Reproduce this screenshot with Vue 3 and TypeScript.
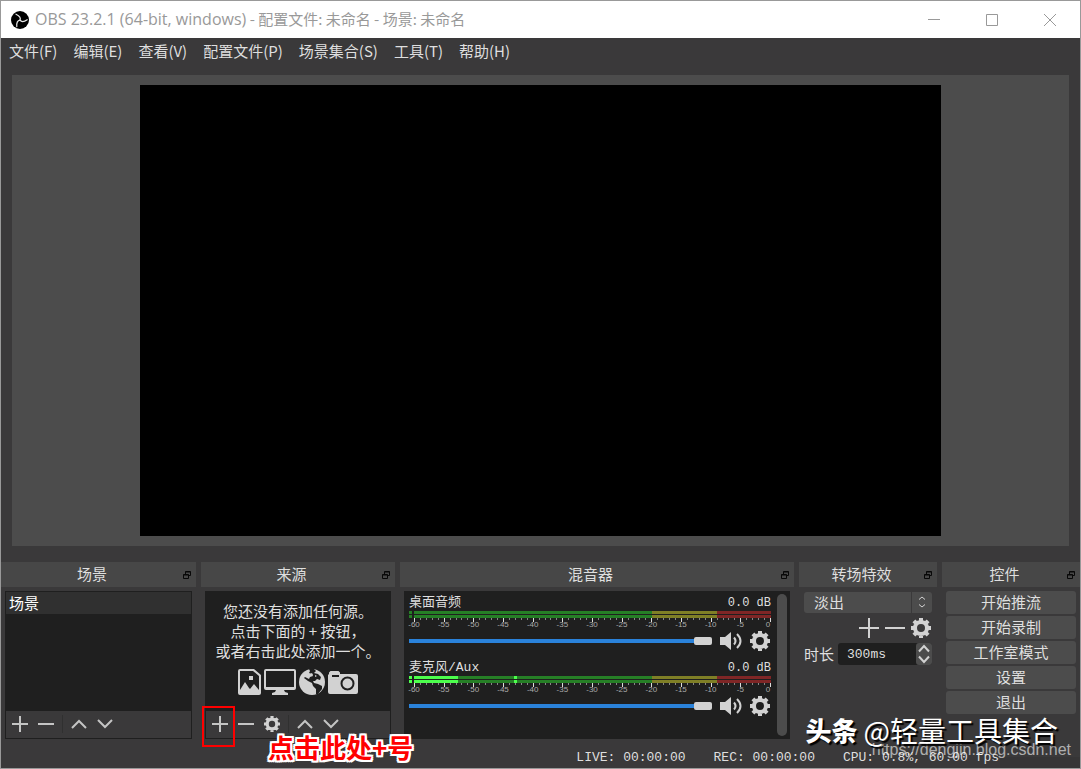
<script setup lang="ts">
import { ref } from 'vue'

interface Channel {
  id: string
  name: string
  level: number
  peak: number | null
}

const menus: string[] = ['文件(F)', '编辑(E)', '查看(V)', '配置文件(P)', '场景集合(S)', '工具(T)', '帮助(H)']
const channels: Channel[] = [
  { id: 'desktop', name: '桌面音频', level: 0, peak: null },
  { id: 'mic', name: '麦克风/Aux', level: 44, peak: 100 },
]
const ticks = Array.from({ length: 61 }, (_, i) => ({
  x: (i * 356) / 60,
  major: i % 5 === 0,
  label: i - 60,
}))
const controls: string[] = ['开始推流', '开始录制', '工作室模式', '设置', '退出']
const transition = ref('淡出')
const duration = ref('300ms')
const volume = ref(100)
const gear =
  'M10 4a6 6 0 1 0 0 12 6 6 0 1 0 0-12zM10 0v4M10 16v4M0 10h4M16 10h4M2.900 2.900l2.600 2.600M14.500 14.500l2.600 2.600M17.100 2.900l-2.600 2.600M5.500 14.500l-2.600 2.600'
const floatIcon = 'M2.500 3v-2.500h5v4h-2M.5 3.500h5v4h-5zM2.500 1h5M.5 4h5'
const blades: number[] = [0, 120, 240]
</script>

<template>
  <div class="window">
    <header class="titlebar">
      <svg class="logo" viewBox="0 0 18 18">
        <circle cx="9" cy="9" r="9" fill="#000" stroke="none" />
        <g fill="none" stroke="#e8e8e8" stroke-width="1.200" stroke-linecap="round">
          <path v-for="a in blades" :key="a" d="M9 9.200C10.200 6.400 8.500 4.800 5 3.200" :transform="`rotate(${a} 9 9.200)`" />
        </g>
      </svg>
      <h1><span class="product">OBS 23.2.1 (64-bit, windows)</span> - 配置文件: 未命名 - 场景: 未命名</h1>
      <div class="winbtns">
        <button aria-label="最小化"><svg viewBox="0 0 12 12"><path d="M0 5.500h12" /></svg></button>
        <button aria-label="最大化"><svg viewBox="0 0 12 12"><path d="M.5.5h11v11H.5z" /></svg></button>
        <button aria-label="关闭"><svg viewBox="0 0 12 12"><path d="M0 0l12 12M12 0L0 12" /></svg></button>
      </div>
    </header>

    <nav class="menubar">
      <button v-for="m in menus" :key="m">{{ m }}</button>
    </nav>

    <main class="preview"><div class="canvas"></div></main>

    <div class="docks">
      <section class="dock">
        <div class="dock-title">
          <h2>场景</h2>
          <button class="float" aria-label="浮动"><svg viewBox="0 0 8 8"><path :d="floatIcon" /></svg></button>
        </div>
        <div class="frame">
          <ul class="list"><li>场景</li></ul>
          <div class="tools">
            <button aria-label="添加"><svg viewBox="0 0 16 16"><path d="M8 0v16M0 8h16" /></svg></button>
            <button aria-label="删除"><svg viewBox="0 0 16 16"><path d="M0 8h16" /></svg></button>
            <i class="sep"></i>
            <button aria-label="上移"><svg viewBox="0 0 16 16"><path d="M1 12l7-7 7 7" /></svg></button>
            <button aria-label="下移"><svg viewBox="0 0 16 16"><path d="M1 4l7 7 7-7" /></svg></button>
          </div>
        </div>
      </section>

      <section class="dock">
        <div class="dock-title">
          <h2>来源</h2>
          <button class="float" aria-label="浮动"><svg viewBox="0 0 8 8"><path :d="floatIcon" /></svg></button>
        </div>
        <div class="frame">
          <div class="empty">
            <p>您还没有添加任何源。<br />点击下面的 + 按钮，<br />或者右击此处添加一个。</p>
            <div class="kinds">
              <svg class="k-image" viewBox="0 0 23 26"><path fill-rule="evenodd" d="M2 0h14l7 6v18a2 2 0 0 1-2 2H2a2 2 0 0 1-2-2V2a2 2 0 0 1 2-2zm0 2v19l5-8 4 6 1 1 4-5 5 6V7l-6-5zM11 7h4v4h-4z" /></svg>
              <svg class="k-screen" viewBox="0 0 32 26"><path fill-rule="evenodd" d="M2 0h28a2 2 0 0 1 2 2v17a2 2 0 0 1-2 2H20l1 2 3 1v2H8v-2l3-1 1-2H2a2 2 0 0 1-2-2V2a2 2 0 0 1 2-2zm0 2v16h28V2z" /></svg>
              <svg class="k-globe" viewBox="0 0 26 26"><circle cx="13" cy="13" r="13" /><path fill="#1f1f1f" d="M10 0l5 0 2 2-2 2 4 1 3 3-1 3-3-1-2 2-2 0 1 2 4 1 4 2 0 3-4 5-2 0 0-5-3-3-1-3-4-2-4-3 1-1 4 2 1-2 3-1-1-2-3-1 1-2z" /><path d="M12 4l2 1-1 2-2-1zM16 6l2 1-2 1z" /></svg>
              <svg class="k-camera" viewBox="0 0 30 23"><path fill-rule="evenodd" d="M1 3V1.500L2.500 0h8L12 1.500V3h16a2 2 0 0 1 2 2v16a2 2 0 0 1-2 2H2a2 2 0 0 1-2-2V4zM4 4v2h7V4zM19.500 5.500a7 7 0 1 0 0 14 7 7 0 0 0 0-14zm0 2a5 5 0 1 1 0 10 5 5 0 0 1 0-10z" /></svg>
            </div>
          </div>
          <div class="tools">
            <button class="marked" aria-label="添加"><svg viewBox="0 0 16 16"><path d="M8 0v16M0 8h16" /></svg></button>
            <button aria-label="删除"><svg viewBox="0 0 16 16"><path d="M0 8h16" /></svg></button>
            <button aria-label="属性"><svg class="gear" viewBox="0 0 20 20"><path :d="gear" /></svg></button>
            <i class="sep"></i>
            <button aria-label="上移"><svg viewBox="0 0 16 16"><path d="M1 12l7-7 7 7" /></svg></button>
            <button aria-label="下移"><svg viewBox="0 0 16 16"><path d="M1 4l7 7 7-7" /></svg></button>
          </div>
          <span class="callout">点击此处+号</span>
        </div>
      </section>

      <section class="dock">
        <div class="dock-title">
          <h2>混音器</h2>
          <button class="float" aria-label="浮动"><svg viewBox="0 0 8 8"><path :d="floatIcon" /></svg></button>
        </div>
        <div class="mixer">
          <div class="channels">
            <div v-for="c in channels" :key="c.id" class="channel">
              <div class="names"><label :for="c.id">{{ c.name }}</label><span>0.0 dB</span></div>
              <svg class="meter" viewBox="0 0 362 18">
                <g v-for="y in [0, 4]" :key="y">
                  <rect x="0" :y="y" width="3" height="3" :fill="c.level ? '#4cff4c' : '#267f26'" />
                  <rect x="5" :y="y" width="238" height="3" fill="#267f26" />
                  <rect x="243" :y="y" width="65" height="3" fill="#7f7f26" />
                  <rect x="308" :y="y" width="54" height="3" fill="#7f2626" />
                  <rect x="5" :y="y" :width="c.level" height="3" fill="#4cff4c" />
                  <rect v-if="c.peak" :x="c.peak + 5" :y="y" width="3" height="3" fill="#4cff4c" />
                </g>
                <g v-for="t in ticks" :key="t.label">
                  <rect :x="Math.round(t.x) + 5" y="7" width="1" :height="t.major ? 4 : 2" :fill="t.major ? '#ddd' : '#888'" />
                  <text v-if="t.major" :x="t.label === 0 ? 359 : t.x + 5" y="16" text-anchor="middle">{{ t.label }}</text>
                </g>
              </svg>
              <div class="vol">
                <input :id="c.id" v-model="volume" type="range" min="0" max="100" />
                <button aria-label="静音"><svg class="speaker" viewBox="0 0 22 18"><path d="M0 5h5l6-5v18l-6-5H0z" /><path class="wave" d="M14 5.500q3 3.500 0 7M17 2q7 7 0 14" /></svg></button>
                <button aria-label="设置"><svg class="gear big" viewBox="0 0 20 20"><path :d="gear" /></svg></button>
              </div>
            </div>
          </div>
          <div class="scroll"></div>
        </div>
      </section>

      <section class="dock">
        <div class="dock-title">
          <h2>转场特效</h2>
          <button class="float" aria-label="浮动"><svg viewBox="0 0 8 8"><path :d="floatIcon" /></svg></button>
        </div>
        <div class="trans">
          <div class="combo">
            <select v-model="transition" aria-label="转场特效"><option>淡出</option></select>
            <span class="arrows"><svg viewBox="0 0 8 12"><path d="M1 3.500L4 1l3 2.500M1 8.500L4 11l3-2.500" /></svg></span>
          </div>
          <div class="trans-tools">
            <button aria-label="添加"><svg viewBox="0 0 20 20"><path d="M10 0v20M0 10h20" /></svg></button>
            <button aria-label="删除"><svg viewBox="0 0 20 20"><path d="M0 10h20" /></svg></button>
            <button aria-label="属性"><svg class="gear big" viewBox="0 0 20 20"><path :d="gear" /></svg></button>
          </div>
          <div class="duration">
            <label for="dur">时长</label>
            <div class="spin">
              <input id="dur" v-model="duration" type="text" />
              <span class="steps"><svg viewBox="0 0 12 18"><path d="M1 6.500L6 1l5 5.500M1 11.500L6 17l5-5.500" /></svg></span>
            </div>
          </div>
        </div>
      </section>

      <section class="dock">
        <div class="dock-title">
          <h2>控件</h2>
          <button class="float" aria-label="浮动"><svg viewBox="0 0 8 8"><path :d="floatIcon" /></svg></button>
        </div>
        <div class="controls"><button v-for="b in controls" :key="b">{{ b }}</button></div>
      </section>
    </div>

    <footer class="status">
      <span>LIVE: 00:00:00</span><span>REC: 00:00:00</span><span>CPU: 0.8%, 60.00 fps</span>
    </footer>
    <div class="patch"></div>
    <div class="url">https://dengjin.blog.csdn.net</div>
    <div class="mark"><b>头条</b><span>@轻量工具集合</span></div>
  </div>
</template>

<style>
body {
  background: #999;
}
</style>

<style scoped>
* {
  box-sizing: border-box;
}
.window {
  position: relative;
  display: flex;
  flex-direction: column;
  height: 100vh;
  overflow: hidden;
  border: 1px solid #999;
  background: #3a393a;
  color: #dfdfdf;
  font: 15px/20px 'Noto Sans CJK SC', sans-serif;
}
button {
  display: flex;
  align-items: center;
  justify-content: center;
  padding: 0;
  border: 0;
  background: none;
  color: inherit;
  font: inherit;
}
h1,
h2,
p,
ul {
  margin: 0;
  padding: 0;
  font-size: 15px;
  font-weight: 400;
}
svg {
  display: block;
  overflow: visible;
  fill: none;
  stroke: #d2d2d2;
}
.titlebar {
  flex: none;
  display: flex;
  align-items: center;
  height: 37px;
  padding-left: 10px;
  background: #fff;
  color: #999;
}
.logo {
  width: 18px;
  height: 18px;
  margin-right: 6px;
}
.titlebar h1 {
  flex: 1;
  padding-bottom: 2px;
}
.product {
  font-family: 'Open Sans', sans-serif;
  font-size: 16px;
}
.winbtns {
  display: flex;
  gap: 46px;
  padding-right: 24px;
}
.winbtns svg {
  width: 12px;
  height: 12px;
  stroke: #999;
}
.menubar {
  flex: none;
  display: flex;
  gap: 16px;
  height: 37px;
  padding: 3px 8px;
}
.menubar button {
  height: 20px;
}
.preview {
  flex: 1;
  min-height: 0;
  display: flex;
  justify-content: center;
  margin: 0 11px;
  padding: 10px;
  background: #4c4c4c;
}
.canvas {
  height: 100%;
  aspect-ratio: 16 / 9;
  background: #000;
}
.docks {
  flex: none;
  display: grid;
  grid-template-columns: 195fr 194fr 394fr 138fr 138fr;
  gap: 5px;
  margin-top: 16px;
}
.dock {
  min-width: 0;
}
.dock-title {
  display: flex;
  align-items: center;
  height: 25px;
  margin-bottom: 4px;
  padding-right: 5px;
  background: #474747;
}
.dock-title h2 {
  flex: 1;
  padding-bottom: 2px;
  text-align: center;
}
.float svg {
  width: 8px;
  height: 8px;
  stroke: #080808;
}
.frame {
  position: relative;
  display: flex;
  flex-direction: column;
  height: 148px;
  margin: 0 4px;
  border: 1px solid #1f1f1f;
  background: #1f1f1f;
}
.list {
  flex: 1;
  list-style: none;
}
.list li {
  height: 22px;
  padding-left: 3px;
  background: #303030;
  color: #fff;
  line-height: 22px;
}
.tools {
  display: flex;
  align-items: flex-start;
  gap: 2px;
  height: 27px;
  padding: 1px 2px;
  background: #3a393a;
}
.tools button {
  width: 24px;
  height: 24px;
}
.tools svg {
  width: 16px;
  height: 16px;
  stroke: #c4c4c4;
  stroke-width: 2;
}
.sep {
  width: 1px;
  height: 18px;
  margin: 3px 2px;
  background: #303030;
}
.gear.big {
  width: 20px;
  height: 20px;
}
.marked {
  position: relative;
}
.marked::after {
  content: '';
  position: absolute;
  inset: -6px -3px -11px -6px;
  border: 2px solid #f00;
}
.callout {
  position: absolute;
  top: 140px;
  left: 62px;
  z-index: 2;
  white-space: nowrap;
  color: #f00;
  font-size: 26px;
  font-weight: 700;
  line-height: 30px;
  text-shadow: 2px 0 #fff, -2px 0 #fff, 0 2px #fff, 0 -2px #fff, 1px 1px #fff, -1px 1px #fff, 1px -1px #fff, -1px -1px #fff, 2px 2px #fff, -2px 2px #fff, 2px -2px #fff, -2px -2px #fff;
}
.empty {
  flex: 1;
  padding-top: 9px;
  text-align: center;
}
.empty p {
  white-space: nowrap;
}
.kinds {
  display: flex;
  align-items: center;
  justify-content: center;
  gap: 3px;
  margin-top: 8px;
}
.kinds svg {
  height: 26px;
  fill: #d2d2d2;
  stroke: none;
}
.k-image {
  width: 23px;
}
.k-screen {
  width: 32px;
}
.k-globe {
  width: 26px;
}
.kinds .k-camera {
  width: 30px;
  height: 23px;
}
.mixer {
  display: flex;
  gap: 6px;
  height: 148px;
  margin: 0 4px;
  padding: 0 3px 0 5px;
  background: #1f1f1f;
}
.channels {
  flex: 1;
  min-width: 0;
}
.channel {
  height: 65px;
  padding-top: 2px;
}
.names {
  display: flex;
  justify-content: space-between;
  height: 18px;
  font: 12px/20px 'Liberation Mono', 'Noto Sans CJK SC', monospace;
}
.names label {
  font-size: 13px;
}
.meter {
  width: 100%;
  stroke: none;
}
.meter text {
  fill: #aaa;
  font: 8px 'Liberation Sans', sans-serif;
}
.vol {
  display: flex;
  align-items: center;
  gap: 8px;
  height: 24px;
  padding-right: 1px;
}
.vol input {
  flex: 1;
  min-width: 0;
  height: 10px;
  margin: 0;
  appearance: none;
  background: linear-gradient(#2a82da, #2a82da) left center / 96% 4px no-repeat;
}
.vol input::-webkit-slider-thumb {
  appearance: none;
  width: 18px;
  height: 8px;
  border-radius: 2px;
  background: #d2d2d2;
}
.speaker {
  width: 22px;
  height: 18px;
  fill: #d2d2d2;
  stroke: none;
}
.wave {
  fill: none;
  stroke: #d2d2d2;
  stroke-width: 2;
}
.scroll {
  width: 10px;
  margin: 3px 0;
  border-radius: 5px;
  background: #4c4c4c;
}
.trans {
  padding: 1px 5px;
}
.combo {
  position: relative;
}
.combo select {
  display: block;
  width: 100%;
  height: 21px;
  padding: 0 10px 2px;
  border: 0;
  border-radius: 3px;
  appearance: none;
  background: #4c4c4c;
  color: inherit;
  font: inherit;
}
.arrows {
  position: absolute;
  top: 0;
  right: 0;
  width: 21px;
  height: 21px;
  padding: 4px 6px;
  border-left: 1px solid #3a393a;
  pointer-events: none;
}
.arrows svg {
  width: 8px;
  height: 12px;
}
.trans-tools {
  display: flex;
  justify-content: flex-end;
  gap: 6px;
  margin: 5px 1px;
}
.trans-tools svg {
  width: 20px;
  height: 20px;
  stroke-width: 2;
}
.gear path {
  stroke: #d2d2d2;
  stroke-width: 4;
}
.duration {
  display: flex;
  align-items: center;
  gap: 4px;
}
.spin {
  flex: 1;
  min-width: 0;
  display: flex;
  height: 22px;
  border-radius: 3px;
  background: #1f1f1f;
}
.spin input {
  flex: 1;
  min-width: 0;
  padding: 0 0 0 9px;
  border: 0;
  background: none;
  color: inherit;
  font: 13px 'Liberation Mono', monospace;
}
.steps {
  width: 16px;
  padding: 2px;
  border-radius: 3px;
  background: #4c4c4c;
}
.steps svg {
  width: 12px;
  height: 18px;
  stroke-width: 2;
}
.controls {
  display: grid;
  gap: 2px;
  padding: 0 4px;
}
.controls button {
  height: 23px;
  padding-bottom: 2px;
  border-radius: 3px;
  background: #4c4c4c;
}
.status {
  flex: none;
  display: flex;
  justify-content: flex-end;
  gap: 28px;
  height: 29px;
  padding: 9px 81px 0 0;
  font: 13px/20px 'Liberation Mono', monospace;
}
.patch {
  position: absolute;
  right: 0;
  bottom: 0;
  width: 80px;
  height: 11px;
  background: #363536;
}
.url {
  position: absolute;
  right: 9px;
  bottom: 8px;
  color: rgba(255, 255, 255, 0.6);
  font: 16px/20px 'Liberation Sans', sans-serif;
}
.mark {
  position: absolute;
  right: 22px;
  bottom: 20px;
  display: flex;
  gap: 6px;
  color: #fff;
  font-size: 28px;
  line-height: 36px;
  text-shadow: 2px 2px 1px #000;
}
.mark b {
  font-size: 26px;
  font-weight: 900;
}
</style>
